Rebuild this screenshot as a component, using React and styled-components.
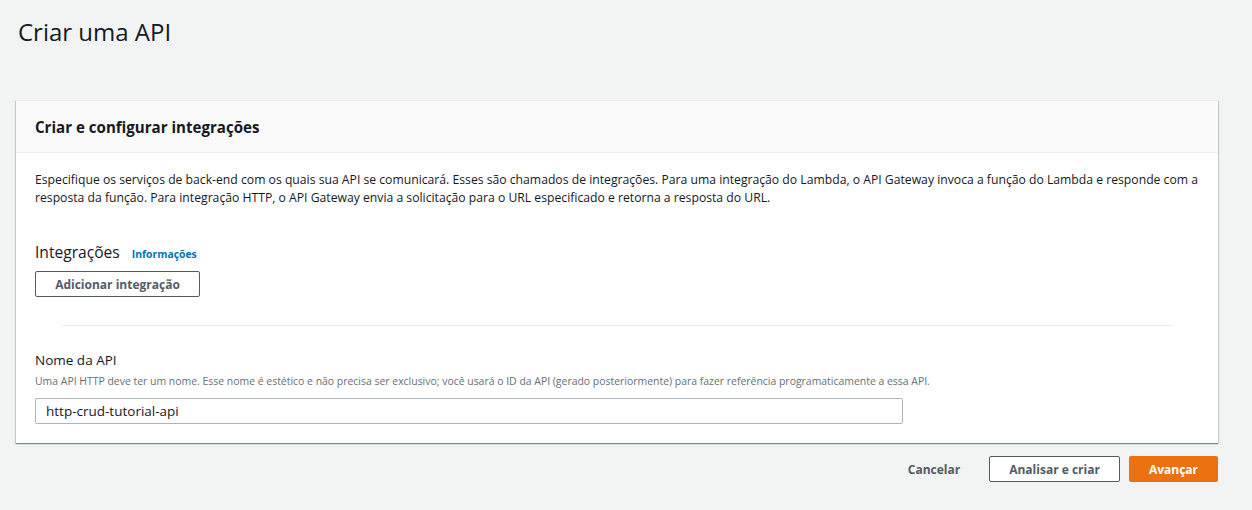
import styled, { createGlobalStyle } from "styled-components";

const GlobalStyle = createGlobalStyle`
  body {
    margin: 0;
    background: #f2f3f3;
    font-family: "Open Sans", "Noto Sans", sans-serif;
    color: #16191f;
  }
`;

const Page = styled.div`
  padding: 17px 34px 20px 16px;
`;

const Title = styled.h1`
  margin: 0 0 53px 2px;
  font-size: 24px;
  line-height: 30px;
  font-weight: 400;
  color: #16191f;
`;

const Card = styled.section`
  background: #fff;
  border-top: 1px solid #eaeded;
  box-shadow: 0 1px 1px 0 rgba(0, 28, 36, 0.3), 1px 1px 1px 0 rgba(0, 28, 36, 0.15),
    -1px 1px 1px 0 rgba(0, 28, 36, 0.15);
`;

const CardHeader = styled.header`
  height: 51px;
  display: flex;
  align-items: center;
  padding: 0 19px;
  background: #fafafa;
  border-bottom: 1px solid #eaeded;
  h2 {
    margin: 0;
    font-size: 15.1px;
    font-weight: 700;
    line-height: 22px;
  }
`;

const CardBody = styled.div`
  padding: 18px 19px 19px;
`;

const Intro = styled.p`
  margin: 0;
  font-size: 12.2px;
  line-height: 18px;
  color: #16191f;
`;

const SectionRow = styled.div`
  display: flex;
  align-items: baseline;
  gap: 12px;
  margin-top: 34px;
  h3 {
    margin: 0;
    font-size: 15.6px;
    font-weight: 400;
    line-height: 22px;
  }
  a {
    font-size: 10.4px;
    font-weight: 700;
    color: #0073bb;
    text-decoration: none;
  }
`;

const Button = styled.button`
  height: 26px;
  padding: 0 ${(p) => p.$pad ?? 19}px;
  font-family: inherit;
  font-size: 12px;
  font-weight: 700;
  white-space: nowrap;
  border-radius: 2px;
  cursor: pointer;
  border: 1px solid ${(p) => (p.$primary ? "#ec7211" : p.$plain ? "transparent" : "#545b64")};
  background: ${(p) => (p.$primary ? "#ec7211" : p.$plain ? "transparent" : "#fff")};
  color: ${(p) => (p.$primary ? "#fff" : "#545b64")};
`;

const AddButton = styled(Button)`
  display: block;
  margin-top: 8px;
  width: 165px;
  padding: 0;
`;

const Divider = styled.hr`
  margin: 28px 26px 24px 27px;
  border: 0;
  border-top: 1px solid #eaeded;
`;

const Label = styled.label`
  display: block;
  font-size: 13.5px;
  line-height: 20px;
`;

const Hint = styled.div`
  font-size: 10.45px;
  line-height: 16px;
  color: #687078;
  margin-top: 3px;
`;

const Input = styled.input`
  display: block;
  box-sizing: border-box;
  width: 868px;
  height: 26px;
  margin-top: 9px;
  padding: 0 10px;
  border: 1px solid #aab7b8;
  border-radius: 2px;
  font-family: inherit;
  font-size: 13.5px;
  color: #16191f;
  outline: none;
`;

const Footer = styled.div`
  display: flex;
  justify-content: flex-end;
  gap: 9px;
  margin-top: 13px;
`;

export default function App() {
  return (
    <>
      <GlobalStyle />
      <Page>
        <Title>Criar uma API</Title>
        <Card>
          <CardHeader>
            <h2>Criar e configurar integrações</h2>
          </CardHeader>
          <CardBody>
            <Intro>
              Especifique os serviços de back-end com os quais sua API se comunicará. Esses são
              chamados de integrações. Para uma integração do Lambda, o API Gateway invoca a função do
              Lambda e responde com a resposta da função. Para integração HTTP, o API Gateway envia a
              solicitação para o URL especificado e retorna a resposta do URL.
            </Intro>
            <SectionRow>
              <h3>Integrações</h3>
              <a href="#">Informações</a>
            </SectionRow>
            <AddButton>Adicionar integração</AddButton>
            <Divider />
            <Label htmlFor="api-name">Nome da API</Label>
            <Hint>
              Uma API HTTP deve ter um nome. Esse nome é estético e não precisa ser exclusivo; você
              usará o ID da API (gerado posteriormente) para fazer referência programaticamente a essa
              API.
            </Hint>
            <Input id="api-name" defaultValue="http-crud-tutorial-api" />
          </CardBody>
        </Card>
        <Footer>
          <Button $plain $pad={19}>Cancelar</Button>
          <Button>Analisar e criar</Button>
          <Button $primary>Avançar</Button>
        </Footer>
      </Page>
    </>
  );
}
